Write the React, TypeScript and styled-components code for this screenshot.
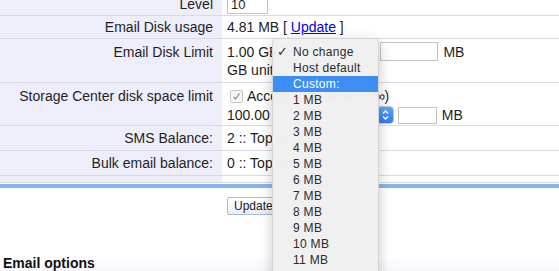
import React from 'react';
import styled, { createGlobalStyle } from 'styled-components';

const GlobalStyle = createGlobalStyle`
  html, body {
    margin: 0;
    padding: 0;
    background: #ffffff;
    overflow: hidden;
  }
  body {
    font-family: "Liberation Sans", Arial, Helvetica, sans-serif;
    font-size: 14px;
    color: #1e1e1e;
  }
`;

const Page = styled.div`
  position: relative;
  width: 559px;
  height: 271px;
  overflow: hidden;
`;

const FormTable = styled.div`
  margin-top: -7px;
  display: flex;
  flex-direction: column;
`;

const Row = styled.div<{ $height: number }>`
  display: grid;
  grid-template-columns: 222px 1fr;
  column-gap: 2px;
  height: ${({ $height }) => $height}px;
  border-bottom: 1px solid #dadae6;
  box-sizing: border-box;
`;

const Label = styled.div<{ $top?: boolean }>`
  background: #eeeefa;
  padding: ${({ $top }) => ($top ? '3px 9px 0 0' : '0 9px 0 0')};
  display: flex;
  justify-content: flex-end;
  align-items: ${({ $top }) => ($top ? 'flex-start' : 'center')};
  white-space: nowrap;
`;

const Value = styled.div<{ $top?: boolean }>`
  padding-left: 3px;
  display: flex;
  flex-direction: column;
  justify-content: ${({ $top }) => ($top ? 'flex-start' : 'center')};
  padding-top: ${({ $top }) => ($top ? '3px' : '0')};
  white-space: nowrap;
`;

const Line = styled.div<{ $h?: number }>`
  display: flex;
  align-items: center;
  height: ${({ $h }) => $h ?? 17}px;
`;

const TextInput = styled.div<{ $w: number; $h: number; $ml?: number }>`
  width: ${({ $w }) => $w}px;
  height: ${({ $h }) => $h}px;
  margin-left: ${({ $ml }) => $ml ?? 0}px;
  border: 1px solid #c3c3c3;
  box-sizing: border-box;
  background: #fff;
  font-size: 13px;
  padding-left: 3px;
  display: flex;
  align-items: center;
`;

const Unit = styled.span`
  margin-left: 5px;
`;

const Link = styled.a`
  color: #0000ee;
  text-decoration: underline;
`;

const Select = styled.div<{ $w: number; $ml: number }>`
  width: ${({ $w }) => $w}px;
  height: 18px;
  margin-left: ${({ $ml }) => $ml}px;
  border: 1px solid #c6c6c6;
  border-radius: 4px;
  box-sizing: border-box;
  background: #fff;
  display: flex;
  justify-content: flex-end;
`;

const Stepper = styled.div`
  width: 15px;
  height: 16px;
  border-radius: 3px;
  background: linear-gradient(#5ea6fb, #2f7bef);
  display: flex;
  align-items: center;
  justify-content: center;
`;

const Checkbox = styled.div`
  width: 11px;
  height: 11px;
  margin-left: 3px;
  margin-right: 4px;
  border: 1px solid #c8c8c8;
  border-radius: 2px;
  background: #f6f6f6;
  display: flex;
  align-items: center;
  justify-content: center;
`;

const BlueRule = styled.div`
  height: 4px;
  margin-top: 1px;
  background: #89b5ec;
`;

const ButtonBar = styled.div`
  padding: 9px 0 0 227px;
  height: 18px;
`;

const Button = styled.button`
  font-family: "Liberation Sans", Arial, sans-serif;
  font-size: 12px;
  color: #222;
  height: 18px;
  padding: 0 6px;
  border: 1px solid #a9bcd6;
  border-radius: 2px;
  background: linear-gradient(#ffffff, #eceef4);
`;

const SectionHeader = styled.div`
  margin-top: 28px;
  height: 40px;
  padding: 12px 0 0 3px;
  box-sizing: border-box;
  font-weight: bold;
  font-size: 14px;
  color: #111;
  background: linear-gradient(#ffffff 35%, #eeeefa);
`;

const Menu = styled.div`
  position: absolute;
  left: 272px;
  top: 38px;
  width: 107px;
  padding-top: 5px;
  background: rgba(240, 240, 240, 0.98);
  border: 1px solid #d4d4d4;
  border-radius: 5px;
  box-shadow: 0 4px 14px rgba(0, 0, 0, 0.22);
  box-sizing: border-box;
`;

const MenuItem = styled.div<{ $active?: boolean }>`
  position: relative;
  height: 16px;
  line-height: 16px;
  padding-left: 20px;
  font-size: 12px;
  letter-spacing: 0.3px;
  color: ${({ $active }) => ($active ? '#ffffff' : '#2b2b2b')};
  background: ${({ $active }) => ($active ? '#3d8df4' : 'transparent')};
`;

const Check = styled.span`
  position: absolute;
  left: 4px;
  top: 0;
  font-family: "DejaVu Sans", sans-serif;
  font-size: 13px;
`;

const Chevrons = () => (
  <svg width="9" height="12" viewBox="0 0 9 12">
    <path d="M2 4.5 L4.5 2 L7 4.5 M2 7.5 L4.5 10 L7 7.5" stroke="#fff" strokeWidth="1.4" fill="none" />
  </svg>
);

const Tick = () => (
  <svg width="9" height="9" viewBox="0 0 9 9">
    <path d="M1.5 5 L3.5 7 L7.5 1.5" stroke="#9a9a9a" strokeWidth="1.3" fill="none" />
  </svg>
);

const sizes = Array.from({ length: 16 }, (_, i) => `${i + 1} MB`);

export default function App() {
  return (
    <Page>
      <GlobalStyle />
      <FormTable>
        <Row $height={23}>
          <Label>Level</Label>
          <Value>
            <TextInput $w={41} $h={19}>10</TextInput>
          </Value>
        </Row>
        <Row $height={23}>
          <Label>Email Disk usage</Label>
          <Value>
            <span>
              4.81 MB [ <Link href="#">Update</Link> ]
            </span>
          </Value>
        </Row>
        <Row $height={44}>
          <Label $top>
            <Line $h={19}>Email Disk Limit</Line>
          </Label>
          <Value $top>
            <Line $h={19}>
              1.00 GB
              <Select $w={95} $ml={4} />
              <TextInput $w={58} $h={19} $ml={3} />
              <Unit>MB</Unit>
            </Line>
            <Line>GB units</Line>
          </Value>
        </Row>
        <Row $height={43}>
          <Label $top>
            <Line $h={20}>Storage Center disk space limit</Line>
          </Label>
          <Value $top>
            <Line $h={20}>
              <Checkbox>
                <Tick />
              </Checkbox>
              Accept host default (∞)
            </Line>
            <Line $h={18}>
              100.00
              <Select $w={122} $ml={2}>
                <Stepper>
                  <Chevrons />
                </Stepper>
              </Select>
              <TextInput $w={39} $h={17} $ml={4} />
              <Unit>MB</Unit>
            </Line>
          </Value>
        </Row>
        <Row $height={25}>
          <Label>SMS Balance:</Label>
          <Value>
            <span>2 :: Top up</span>
          </Value>
        </Row>
        <Row $height={25}>
          <Label>Bulk email balance:</Label>
          <Value>
            <span>0 :: Top up</span>
          </Value>
        </Row>
        <Row $height={7}>
          <Label />
          <Value />
        </Row>
      </FormTable>
      <BlueRule />
      <ButtonBar>
        <Button>Update</Button>
      </ButtonBar>
      <SectionHeader>Email options</SectionHeader>

      <Menu>
        <MenuItem>
          <Check>✓</Check>No change
        </MenuItem>
        <MenuItem>Host default</MenuItem>
        <MenuItem $active>Custom:</MenuItem>
        {sizes.map((s) => (
          <MenuItem key={s}>{s}</MenuItem>
        ))}
      </Menu>
    </Page>
  );
}
